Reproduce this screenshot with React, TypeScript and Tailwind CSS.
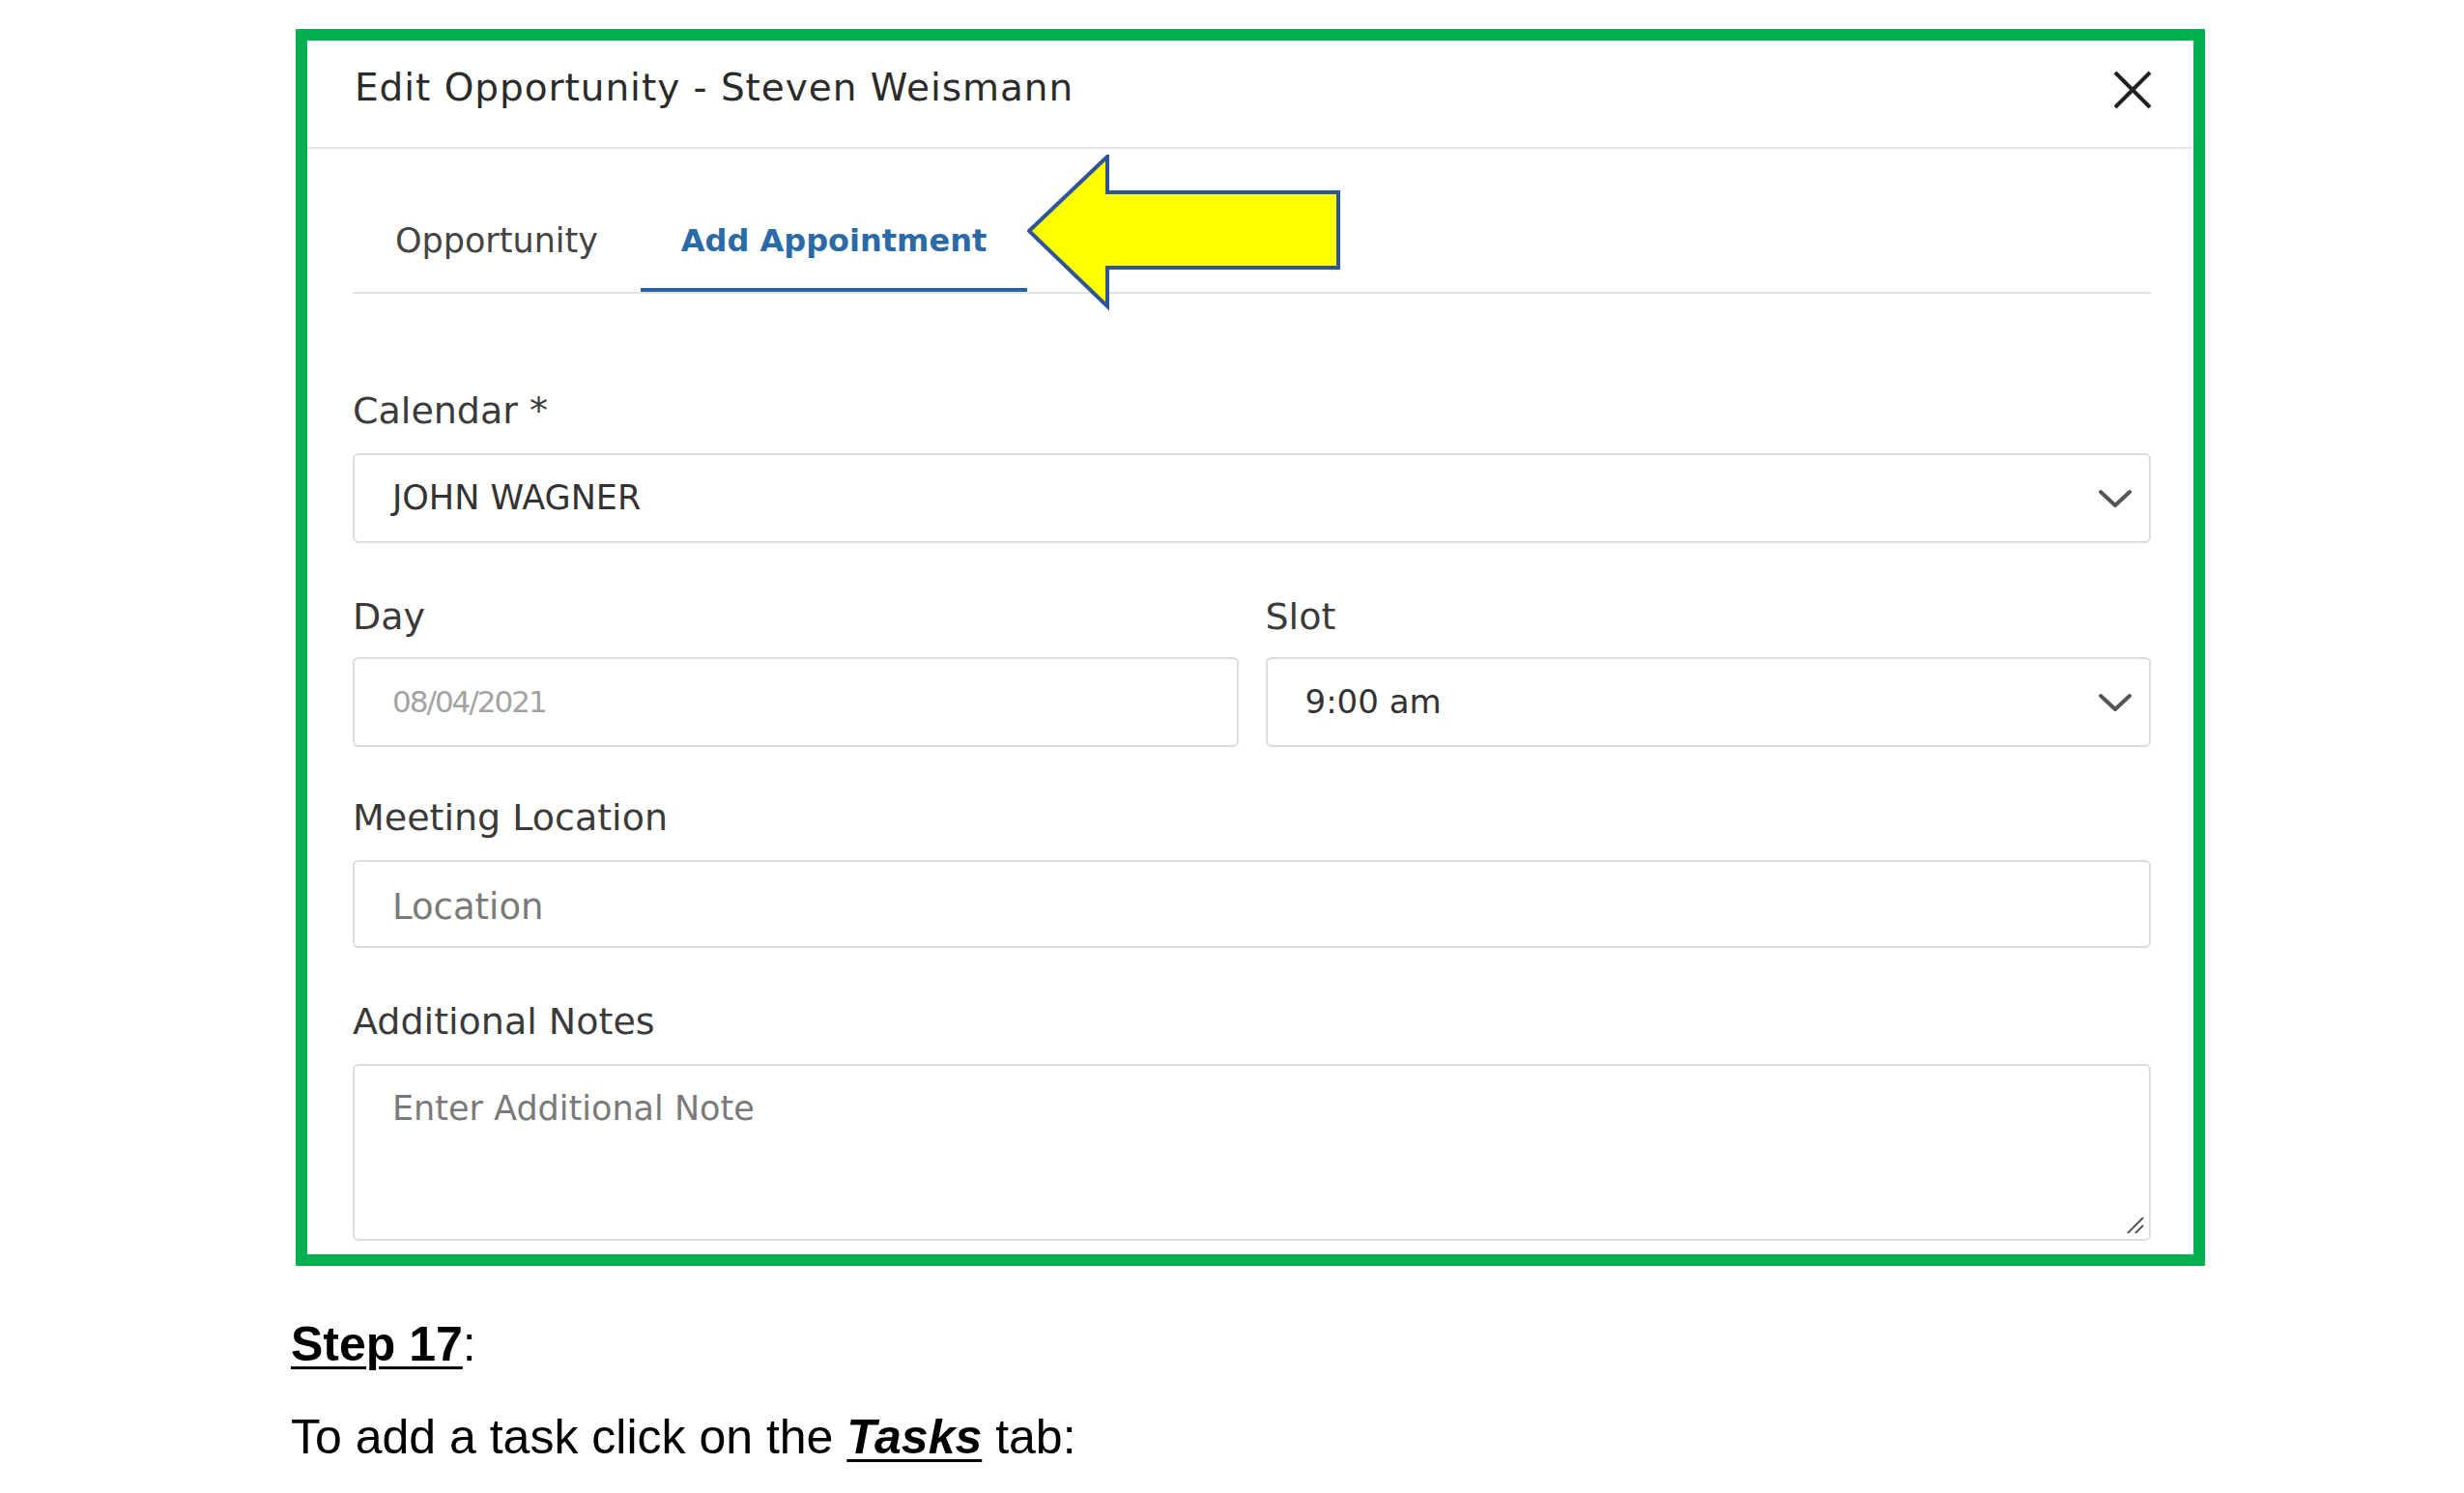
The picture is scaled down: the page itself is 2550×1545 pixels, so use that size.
import React from 'react';

// ventana "Edit Opportunity" con flecha amarilla, mas el texto del paso
const ui = { fontFamily: '"DejaVu Sans", "Noto Sans", sans-serif' };
const doc = { fontFamily: '"Liberation Sans", Arial, sans-serif' };

function Chevron() {
  return (
    <svg width="36" height="20" viewBox="0 0 36 20" fill="none">
      <path d="M3 3 L18 17 L33 3" stroke="#555" strokeWidth="4" strokeLinecap="round" strokeLinejoin="round" />
    </svg>
  );
}

function Label({ children }: { children: React.ReactNode }) {
  return <div className="h-[40px] leading-[40px] text-[38px] text-[#3a3a3a]">{children}</div>;
}

function Field({ children, select = false, h = 'h-[93px]' }: { children: React.ReactNode; select?: boolean; h?: string }) {
  return (
    <div className={`${h} flex items-center justify-between pl-[39px] pr-[17px] border-2 border-[#dcdcdc] rounded-[6px] bg-white`}>
      <div>{children}</div>
      {select && <Chevron />}
    </div>
  );
}

export default function App() {
  return (
    <div className="w-[2550px] h-[1545px] bg-white pt-[30px]">
      <div className="relative ml-[306px] w-[1976px] border-[12px] border-[#00b050] bg-white" style={ui}>
        {/* cabecera */}
        <div className="h-[112px] border-b-2 border-[#e6e6e6] flex items-start justify-between pl-[49px] pr-[42px]">
          <div className="mt-[25px] h-[48px] leading-[48px] text-[39px] tracking-[0.95px] text-[#2b2b2b]">
            Edit Opportunity - Steven Weismann
          </div>
          <svg className="mt-[30px]" width="42" height="42" viewBox="0 0 42 42">
            <path d="M3 3 L39 39 M39 3 L3 39" stroke="#222" strokeWidth="4" />
          </svg>
        </div>

        <div className="pl-[47px] pr-[44px] pb-[14px]">
          {/* pestañas */}
          <div className="flex border-b-2 border-[#e3e3e3]">
            <div className="w-[298px] h-[148px] pt-[75px] text-center text-[35px] leading-[40px] text-[#444]">Opportunity</div>
            <div className="w-[400px] h-[148px] pt-[75px] text-center text-[32px] leading-[40px] font-bold text-[#2a6aa6] border-b-4 border-[#2a64a0]">
              Add Appointment
            </div>
            <div className="h-[148px] pt-[75px] pl-[230px] text-[35px] leading-[40px] text-[#444]">Tasks</div>
          </div>

          {/* formulario */}
          <div className="mt-[101px]">
            <Label>Calendar *</Label>
            <div className="mt-[24px]">
              <Field select>
                <span className="text-[35px] text-[#333]">JOHN WAGNER</span>
              </Field>
            </div>
          </div>

          <div className="mt-[56px] grid grid-cols-2 gap-[28px]">
            <div>
              <Label>Day</Label>
              <div className="mt-[22px]">
                <Field>
                  <span className="text-[31px] tracking-[-2px] text-[#a3a3a3]">08/04/2021</span>
                </Field>
              </div>
            </div>
            <div>
              <Label>Slot</Label>
              <div className="mt-[22px]">
                <Field select>
                  <span className="text-[34px] text-[#333]">9:00 am</span>
                </Field>
              </div>
            </div>
          </div>

          <div className="mt-[53px]">
            <Label>Meeting Location</Label>
            <div className="mt-[24px]">
              <Field h="h-[91px]">
                <span className="block pt-[6px] text-[37px] text-[#7a7a7a]">Location</span>
              </Field>
            </div>
          </div>

          <div className="mt-[56px]">
            <Label>Additional Notes</Label>
            <div className="relative mt-[24px] h-[183px] border-2 border-[#dcdcdc] rounded-[6px] pl-[39px] pt-[24px]">
              <div className="text-[35px] leading-[40px] text-[#7a7a7a]">Enter Additional Note</div>
              <svg className="absolute right-[4px] bottom-[4px]" width="22" height="22" viewBox="0 0 22 22">
                <path d="M20 4 L4 20 M20 12 L12 20" stroke="#555" strokeWidth="2" />
              </svg>
            </div>
          </div>
        </div>

        {/* flecha amarilla encima de las pestañas */}
        <svg className="absolute left-[745px] top-[118px]" width="326" height="161" viewBox="0 0 326 161">
          <polygon
            points="2,79 83,2 83,39 322,39 322,117 83,117 83,157"
            fill="#ffff00"
            stroke="#2f5597"
            strokeWidth="4"
            strokeLinejoin="miter"
          />
        </svg>
      </div>

      {/* texto del documento */}
      <div className="pl-[301px] text-black" style={doc}>
        <div className="mt-[53px] h-[56px] leading-[56px] text-[50px]">
          <span className="font-bold underline decoration-[3px] underline-offset-[6px]">Step 17</span>:
        </div>
        <div className="mt-[40px] h-[56px] leading-[56px] text-[50px]">
          To add a task click on the{' '}
          <span className="font-bold italic underline decoration-[3px] underline-offset-[6px]">Tasks</span> tab:
        </div>
      </div>
    </div>
  );
}
